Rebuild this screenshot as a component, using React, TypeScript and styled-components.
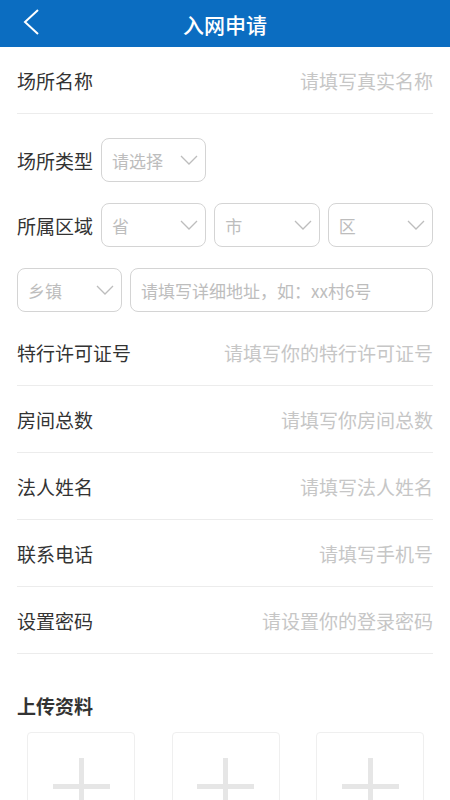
import React from "react";
import styled, { createGlobalStyle } from "styled-components";

const Global = createGlobalStyle`
  html, body { margin: 0; padding: 0; background: #fff; }
  body { font-family: "Noto Sans CJK SC", "Noto Sans", sans-serif; }
  * { box-sizing: border-box; }
`;

const Page = styled.div`
  width: 450px;
  min-height: 800px;
  background: #fff;
  overflow: hidden;
`;

const Header = styled.header`
  height: 47px;
  background: #0b6dc1;
  display: flex;
  align-items: center;
  justify-content: center;
  position: relative;
`;

const Title = styled.h1`
  margin: 0;
  color: #fff;
  font-size: 21px;
  font-weight: 500;
  letter-spacing: 0;
`;

const BackButton = styled.button`
  position: absolute;
  left: 22px;
  top: 6px;
  width: 18px;
  height: 32px;
  border: 0;
  padding: 0;
  background: transparent;
  display: flex;
  align-items: center;
  justify-content: center;
`;

const Form = styled.div`
  padding: 0 17px;
`;

const Row = styled.div`
  height: 67px;
  display: flex;
  align-items: center;
  justify-content: space-between;
  border-bottom: 1px solid #ececec;
`;

const Label = styled.span<{ $w?: number }>`
  font-size: 19px;
  color: #333;
  flex: 0 0 ${(p) => (p.$w ? `${p.$w}px` : "auto")};
  white-space: nowrap;
`;

const Placeholder = styled.span`
  font-size: 19px;
  color: #c6c6c6;
  white-space: nowrap;
`;

const Selects = styled.div`
  padding: 24px 0 7px;
  display: flex;
  flex-direction: column;
  gap: 21px;
`;

const SelRow = styled.div`
  display: flex;
  align-items: center;
  gap: 8px;
`;

const Box = styled.div<{ $grow?: boolean }>`
  height: 44px;
  border: 1px solid #d4d4d4;
  border-radius: 8px;
  display: flex;
  align-items: center;
  justify-content: space-between;
  padding: 0 6px 0 10px;
  flex: ${(p) => (p.$grow ? "1 1 0" : "0 0 105px")};
  min-width: 0;
`;

const BoxText = styled.span`
  font-size: 17px;
  color: #bdbdbd;
  white-space: nowrap;
`;

const UploadTitle = styled.h2`
  margin: 39px 0 0;
  font-size: 19px;
  line-height: 26px;
  font-weight: 700;
  color: #333;
`;

const Uploads = styled.div`
  margin-top: 13px;
  padding: 0 9px 0 10px;
  display: flex;
  justify-content: space-between;
`;

const UploadBox = styled.div`
  width: 108px;
  height: 108px;
  border: 1px solid #efefef;
  border-radius: 4px;
  display: flex;
  align-items: center;
  justify-content: center;
  position: relative;
`;

const Plus = styled.div`
  width: 57px;
  height: 57px;
  position: relative;
  &::before,
  &::after {
    content: "";
    position: absolute;
    background: #e6e6e6;
  }
  &::before {
    left: 0;
    right: 0;
    top: 26px;
    height: 5px;
  }
  &::after {
    top: 0;
    bottom: 0;
    left: 26px;
    width: 5px;
  }
`;

const Chevron = () => (
  <svg width="20" height="12" viewBox="0 0 20 12">
    <polyline points="2,2 10,10 18,2" fill="none" stroke="#bdbdbd" strokeWidth="1.3" />
  </svg>
);

const Select = ({ text, grow }: { text: string; grow?: boolean }) => (
  <Box $grow={grow}>
    <BoxText>{text}</BoxText>
    <Chevron />
  </Box>
);

const fields: [string, string][] = [
  ["特行许可证号", "请填写你的特行许可证号"],
  ["房间总数", "请填写你房间总数"],
  ["法人姓名", "请填写法人姓名"],
  ["联系电话", "请填写手机号"],
  ["设置密码", "请设置你的登录密码"],
];

export default function App() {
  return (
    <Page>
      <Global />
      <Header>
        <BackButton aria-label="back">
          <svg width="18" height="28" viewBox="0 0 18 28">
            <polyline points="16,2 3,14 16,26" fill="none" stroke="#fff" strokeWidth="2" />
          </svg>
        </BackButton>
        <Title>入网申请</Title>
      </Header>
      <Form>
        <Row>
          <Label>场所名称</Label>
          <Placeholder>请填写真实名称</Placeholder>
        </Row>
        <Selects>
          <SelRow>
            <Label $w={76}>场所类型</Label>
            <Select text="请选择" />
          </SelRow>
          <SelRow>
            <Label $w={76}>所属区域</Label>
            <Select text="省" grow />
            <Select text="市" grow />
            <Select text="区" grow />
          </SelRow>
          <SelRow>
            <Select text="乡镇" />
            <Box $grow>
              <BoxText>请填写详细地址，如：xx村6号</BoxText>
            </Box>
          </SelRow>
        </Selects>
        {fields.map(([l, p]) => (
          <Row key={l}>
            <Label>{l}</Label>
            <Placeholder>{p}</Placeholder>
          </Row>
        ))}
        <UploadTitle>上传资料</UploadTitle>
        <Uploads>
          <UploadBox><Plus /></UploadBox>
          <UploadBox><Plus /></UploadBox>
          <UploadBox><Plus /></UploadBox>
        </Uploads>
      </Form>
    </Page>
  );
}
